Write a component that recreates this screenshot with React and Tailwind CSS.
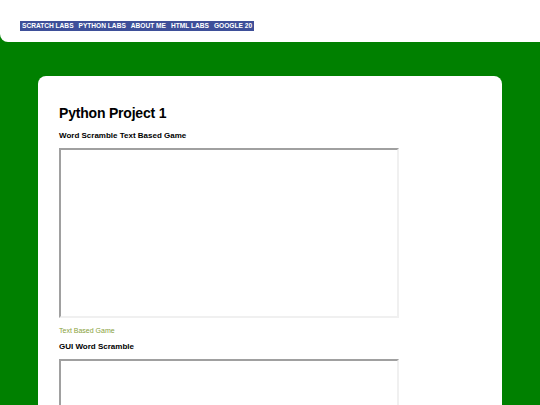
import React from 'react';

const navItems = ['SCRATCH LABS', 'PYTHON LABS', 'ABOUT ME', 'HTML LABS', 'GOOGLE 20'];

function Frame() {
  return (
    <div className="w-[340px] h-[170px] bg-white border-2 border-t-[#a0a0a0] border-l-[#a0a0a0] border-r-[#f0f0f0] border-b-[#f0f0f0]" />
  );
}

export default function App() {
  return (
    <div className="min-h-[405px] bg-[#008000] font-['Liberation_Sans',Arial,sans-serif]">
      <header className="h-[42px] bg-white rounded-bl-lg pl-[20px] pt-[21px] flex items-start">
        <nav className="flex gap-[5px] bg-[#3e4f99] px-[2px] h-[10px] items-center">
          {navItems.map((item) => (
            <span key={item} className="text-white text-[6.6px] font-bold leading-none">{item}</span>
          ))}
        </nav>
      </header>

      <main className="mx-[38px] mt-[34px] bg-white rounded-lg px-[21px] pt-[28px] pb-4">
        <h1 className="text-[14px] font-bold text-black leading-[18px] tracking-[-0.2px]">Python Project 1</h1>
        <h3 className="mt-[8px] text-[8px] font-bold text-black leading-[11px]">Word Scramble Text Based Game</h3>
        <div className="mt-[7px]">
          <Frame />
        </div>
        <p className="mt-[8px] text-[7px] text-[#88a13b] leading-[10px]">Text Based Game</p>
        <h3 className="mt-[5px] text-[8px] font-bold text-black leading-[11px]">GUI Word Scramble</h3>
        <div className="mt-[7px]">
          <Frame />
        </div>
      </main>
    </div>
  );
}
